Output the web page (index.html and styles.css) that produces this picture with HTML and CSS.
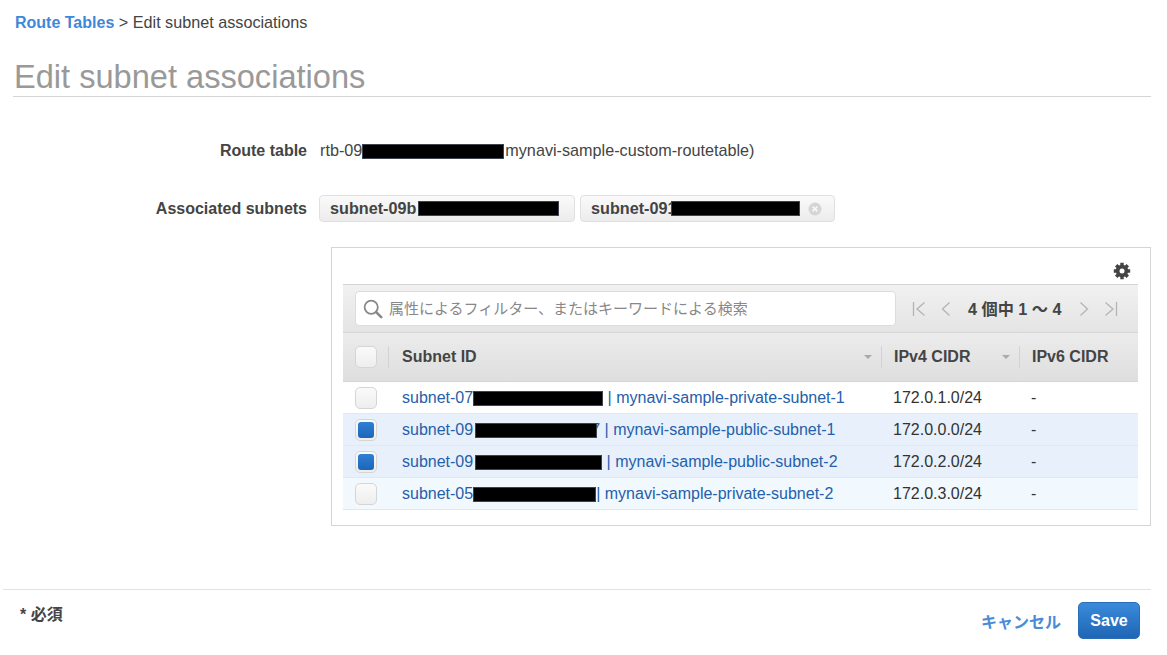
FILE: index.html
```html
<!DOCTYPE html>
<html lang="en">
<head>
    <meta charset="UTF-8">
    <title>Edit subnet associations</title>
    <link rel="stylesheet" href="styles.css">
</head>
<body>
    <div class="breadcrumb"><a href="#">Route Tables</a> &gt; Edit subnet associations</div>
    <h1 class="title">Edit subnet associations</h1>

    <div class="form-row route-row">
        <div class="label">Route table</div>
        <div class="value">rtb-09<span class="mask mask-rtb"></span>mynavi-sample-custom-routetable)</div>
    </div>

    <div class="form-row assoc-row">
        <div class="label">Associated subnets</div>
        <div class="chips">
            <div class="chip chip-first">subnet-09b<span class="mask mask-chip1"></span></div>
            <div class="chip chip-second">subnet-091<span class="mask mask-chip2"></span>
                <svg class="chip-x" width="14" height="14" viewBox="0 0 14 14"><circle cx="7" cy="7" r="6.5" fill="#d5d5d5"/><path d="M4.6 4.6l4.8 4.8M9.4 4.6l-4.8 4.8" stroke="#f7f7f7" stroke-width="1.6"/></svg>
            </div>
        </div>
    </div>

    <div class="panel">
        <div class="panel-top">
            <svg width="18" height="18" viewBox="0 0 18 18">
                <circle cx="9" cy="9" r="6.200" fill="#444"/>
                <path d="M9 .8v16.400M.8 9h16.400M3.200 3.200l11.600 11.600M14.800 3.200L3.200 14.800" stroke="#444" stroke-width="3.400"/>
                <circle cx="9" cy="9" r="2.500" fill="#fff"/>
            </svg>
        </div>
        <div class="filter-bar">
            <div class="search">
                <svg width="20" height="20" viewBox="0 0 20 20"><circle cx="8.200" cy="8.200" r="6.600" fill="none" stroke="#888" stroke-width="1.800"/><path d="M13.200 13.200l5 5" stroke="#888" stroke-width="2.600" stroke-linecap="round"/></svg>
                <span class="search-text">属性によるフィルター、またはキーワードによる検索</span>
            </div>
            <div class="pager">
                <svg width="14" height="16" viewBox="0 0 14 16"><path d="M1.500 1v14M12.500 1.500L5 8l7.500 6.500" fill="none" stroke="#b4b4b4" stroke-width="1.300"/></svg>
                <svg class="pager-prev" width="10" height="16" viewBox="0 0 10 16"><path d="M8.500 1.500L1.500 8l7 6.500" fill="none" stroke="#b4b4b4" stroke-width="1.300"/></svg>
                <span class="pager-text">4 個中 1 〜 4</span>
                <svg class="pager-next" width="10" height="16" viewBox="0 0 10 16"><path d="M1.500 1.500L8.500 8l-7 6.500" fill="none" stroke="#b4b4b4" stroke-width="1.300"/></svg>
                <svg class="pager-last" width="14" height="16" viewBox="0 0 14 16"><path d="M12.500 1v14M1.500 1.500L9 8l-7.500 6.500" fill="none" stroke="#b4b4b4" stroke-width="1.300"/></svg>
            </div>
        </div>

        <div class="grid-row head-row">
            <div class="cell-check"><span class="check"></span></div>
            <div class="cell-id">Subnet ID<span class="sort"></span></div>
            <div class="cell-v4">IPv4 CIDR<span class="sort"></span></div>
            <div class="cell-v6">IPv6 CIDR</div>
        </div>

        <div class="grid-row body-row">
            <div class="cell-check"><span class="check"></span></div>
            <div class="cell-id"><a href="#">subnet-07<span class="mask mask-a"></span> | mynavi-sample-private-subnet-1</a></div>
            <div class="cell-v4">172.0.1.0/24</div>
            <div class="cell-v6">-</div>
        </div>
        <div class="grid-row body-row selected">
            <div class="cell-check"><span class="check checked"></span></div>
            <div class="cell-id"><a href="#">subnet-09<span class="mask mask-b"></span><span class="tail">7</span> | mynavi-sample-public-subnet-1</a></div>
            <div class="cell-v4">172.0.0.0/24</div>
            <div class="cell-v6">-</div>
        </div>
        <div class="grid-row body-row selected">
            <div class="cell-check"><span class="check checked"></span></div>
            <div class="cell-id"><a href="#">subnet-09<span class="mask mask-c"></span> | mynavi-sample-public-subnet-2</a></div>
            <div class="cell-v4">172.0.2.0/24</div>
            <div class="cell-v6">-</div>
        </div>
        <div class="grid-row body-row hovered">
            <div class="cell-check"><span class="check"></span></div>
            <div class="cell-id"><a href="#">subnet-05<span class="mask mask-d"></span>| mynavi-sample-private-subnet-2</a></div>
            <div class="cell-v4">172.0.3.0/24</div>
            <div class="cell-v6">-</div>
        </div>
    </div>

    <div class="footer">
        <div class="required">* 必須</div>
        <div class="actions">
            <a href="#" class="cancel">キャンセル</a>
            <button class="save">Save</button>
        </div>
    </div>
</body>
</html>
```

FILE: styles.css
```css
html, body {
    height: 100%;
}
body {
    margin: 0;
    background: #fff;
    color: #444;
    font-family: "Liberation Sans", "Noto Sans CJK JP", Arial, sans-serif;
    font-size: 16px;
    overflow: hidden;
}
a {
    color: #2460ab;
    text-decoration: none;
}
.breadcrumb {
    padding: 14px 0 0 15px;
    height: 17px;
    line-height: 17px;
    font-size: 16.2px;
    color: #444;
}
.breadcrumb a {
    color: #3f87d8;
    font-weight: bold;
    font-size: 16px;
}
.title {
    margin: 27px 16px 0 13px;
    height: 38px;
    line-height: 38px;
    padding-left: 1px;
    border-bottom: 1px solid #d5d5d5;
    color: #999;
    font-size: 32.6px;
    font-weight: normal;
}
.form-row {
    display: flex;
    align-items: center;
}
.label {
    width: 307px;
    padding-top: 1px;
    text-align: right;
    font-weight: bold;
    font-size: 16px;
}
.route-row {
    margin-top: 44px;
    height: 18px;
}
.value {
    margin-left: 13px;
    font-size: 16.2px;
    white-space: nowrap;
}
.assoc-row {
    margin-top: 36px;
    height: 27px;
}
.chips {
    display: flex;
    gap: 5px;
    margin-left: 12px;
}
.chip {
    display: flex;
    align-items: center;
    box-sizing: border-box;
    height: 27px;
    padding-left: 10px;
    border: 1px solid #e0e0e0;
    border-radius: 4px;
    background: linear-gradient(#fafafa, #ececec);
    font-weight: bold;
    font-size: 16.2px;
    color: #444;
}
.chip-first {
    width: 256px;
}
.chip-second {
    width: 255px;
}
.chip-x {
    margin-left: 8px;
}
.mask {
    display: inline-block;
    position: relative;
    z-index: 1;
    height: 15px;
    background: #000;
    border: 1px solid #3d4450;
    box-sizing: border-box;
    vertical-align: -3px;
}
.mask-rtb {
    width: 142px;
    margin-right: 1px;
}
.mask-chip1 {
    width: 141px;
    margin-left: 2px;
}
.mask-chip2 {
    width: 129px;
    margin-left: -5px;
}
.mask-a {
    width: 130px;
}
.mask-b {
    width: 122px;
    margin-left: 2px;
}
.tail {
    margin-left: -6px;
}
.mask-c {
    width: 127px;
    margin-left: 2px;
}
.mask-d {
    width: 123px;
}
.panel {
    box-sizing: border-box;
    margin: 25px 16px 0 331px;
    height: 279px;
    padding: 0 12px 0 11px;
    border: 1px solid #d5d5d5;
}
.panel-top {
    box-sizing: border-box;
    display: flex;
    justify-content: flex-end;
    align-items: flex-end;
    height: 37px;
    padding: 0 7px 4px 0;
    border-bottom: 1px solid #d5d5d5;
}
.filter-bar {
    display: flex;
    align-items: center;
    height: 47px;
    padding-left: 12px;
    background: linear-gradient(#f1f1f1, #e4e4e4);
    border-bottom: 1px solid #d5d5d5;
}
.search {
    display: flex;
    align-items: center;
    gap: 6px;
    box-sizing: border-box;
    width: 541px;
    height: 35px;
    padding-left: 7px;
    background: #fff;
    border: 1px solid #dcdcdc;
    border-radius: 4px;
    color: #888;
    font-size: 15px;
}
.search-text {
    margin-bottom: 2px;
}
.pager {
    display: flex;
    align-items: center;
    margin-left: 16px;
}
.pager-prev {
    margin-left: 15px;
}
.pager-next {
    margin-left: 17px;
}
.pager-last {
    margin-left: 15px;
}
.pager-text {
    margin: 0 0 2px 17px;
    font-weight: bold;
    font-size: 16.2px;
    color: #444;
}
.grid-row {
    display: grid;
    grid-template-columns: 45px 493px 138px 1fr;
    align-items: center;
}
.head-row {
    height: 48px;
    background: linear-gradient(#ececec, #dedede);
    border-bottom: 1px solid #d5d5d5;
    font-weight: bold;
    font-size: 16px;
}
.head-row .cell-id,
.head-row .cell-v4,
.head-row .cell-v6 {
    position: relative;
    display: flex;
    align-items: center;
    box-sizing: border-box;
    height: 22px;
    border-left: 1px solid #d2d2d2;
    padding-left: 12px;
}
.head-row .cell-id {
    padding-left: 13px;
}
.sort {
    position: absolute;
    right: 9px;
    top: 9px;
    border-left: 4px solid transparent;
    border-right: 4px solid transparent;
    border-top: 4px solid #aaa;
}
.cell-check {
    padding-left: 12px;
    display: flex;
}
.check {
    box-sizing: border-box;
    display: block;
    width: 22px;
    height: 22px;
    border: 1px solid #d5d5d5;
    border-radius: 5px;
    background: linear-gradient(#fafafa, #eee);
}
.checked {
    position: relative;
}
.checked::after {
    content: "";
    position: absolute;
    left: 2px;
    top: 2px;
    width: 16px;
    height: 16px;
    border-radius: 3px;
    background: linear-gradient(#2f7fd4, #1c66b8);
}
.body-row {
    box-sizing: border-box;
    height: 32px;
    border-bottom: 1px solid #e4e8ee;
    background: #fff;
    font-size: 16px;
}
.body-row.selected {
    background: #e8f1fb;
}
.body-row.hovered {
    background: #f1f8fe;
}
.body-row .cell-id {
    padding-left: 14px;
    white-space: nowrap;
}
.body-row .cell-v4 {
    padding-left: 12px;
    color: #333;
}
.body-row .cell-v6 {
    padding-left: 12px;
    color: #333;
}
.footer {
    display: flex;
    justify-content: space-between;
    margin: 63px 16px 0 3px;
    padding-top: 12px;
    border-top: 1px solid #e2e2e2;
}
.required {
    margin: -1px 0 0 17px;
    font-weight: bold;
    font-size: 16px;
}
.actions {
    display: flex;
    align-items: center;
    gap: 17px;
    margin-right: 11px;
}
.cancel {
    color: #4a8bd8;
    font-weight: bold;
    font-size: 16px;
}
.save {
    width: 62px;
    height: 37px;
    padding: 0;
    border: 1px solid #2a6eb8;
    border-radius: 5px;
    background: linear-gradient(#3a8adb, #1f66b5);
    color: #fff;
    font-family: inherit;
    font-weight: bold;
    font-size: 16px;
}
```
